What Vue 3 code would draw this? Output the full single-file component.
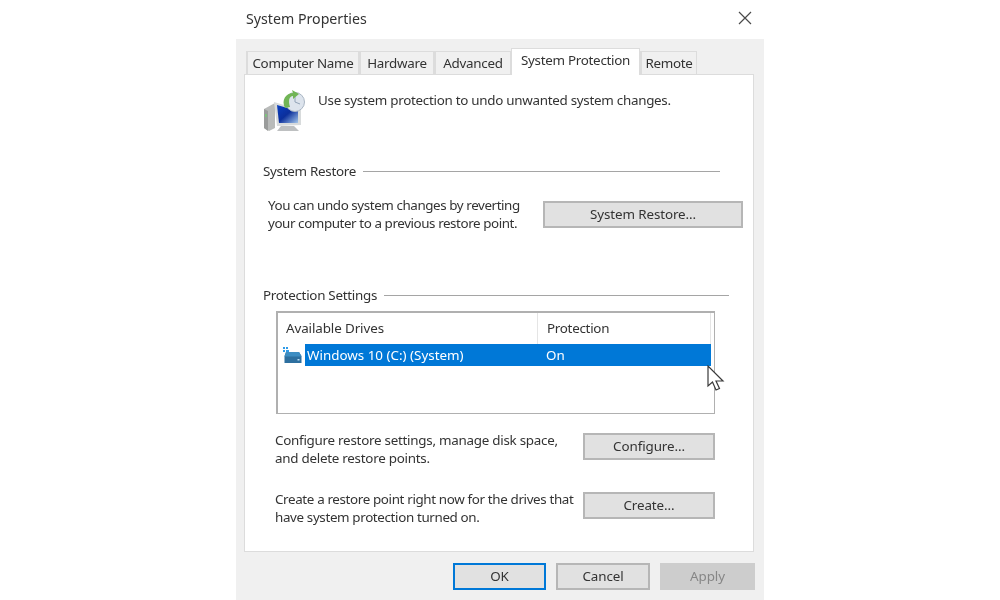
<script setup>
const tabs = [
  { name: 'Computer Name', width: 113 },
  { name: 'Hardware', width: 75 },
  { name: 'Advanced', width: 77 },
  { name: 'System Protection', width: 129, active: true },
  { name: 'Remote', width: 57 }
]
</script>

<template>
  <div class="page">
    <div class="dialog">
      <header class="titlebar">
        <span class="title">System Properties</span>
        <svg class="close" width="14" height="14" viewBox="0 0 14 14" aria-hidden="true">
          <path d="M1 1 13 13M13 1 1 13" stroke="#4a4a4a" stroke-width="1.2" fill="none" />
        </svg>
      </header>

      <div class="body">
        <div class="tabs">
          <div
            v-for="t in tabs"
            :key="t.name"
            class="tab"
            :class="{ active: t.active }"
            :style="{ width: t.width + 'px' }"
          >{{ t.name }}</div>
        </div>

        <section class="panel">
          <div class="intro">
            <svg class="shield" width="42" height="42" viewBox="0 0 42 42" aria-hidden="true">
              <defs>
                <linearGradient id="scr" x1="0" y1="0" x2="1" y2="1">
                  <stop offset="0" stop-color="#0a3fc0" />
                  <stop offset="0.5" stop-color="#0b2f9c" />
                  <stop offset="1" stop-color="#a4c6ea" />
                </linearGradient>
              </defs>
              <path d="M0 19 11 13V38L5 41 0 38Z" fill="#b9bbba" />
              <path d="M0 19 4 21V41L0 38Z" fill="#9a9c9b" />
              <rect x="1" y="24" width="1.800" height="3" fill="#7cc47c" />
              <path d="M10 12 37 20V35L13 36Z" fill="#d8dbdc" />
              <path d="M13 15 34 21 34 33 15 33Z" fill="url(#scr)" />
              <path d="M17 36H30L35 41H13Z" fill="#bec0c1" />
              <circle cx="31" cy="12" r="9.500" fill="#dde4ed" stroke="#aab6c4" stroke-width="1" />
              <path d="M31 6V12L36 14" stroke="#93a4b8" stroke-width="1" fill="none" />
              <path d="M21 18C17 10 22 3 29 3L28 0 35 4 29 9 29 6C25 6 24 11 26 17Z" fill="#71b556" />
            </svg>
            <p class="intro-text">Use system protection to undo unwanted system changes.</p>
          </div>

          <div class="group-head restore-head">
            <span>System Restore</span>
            <i class="rule"></i>
          </div>
          <div class="action restore-row">
            <p class="copy">You can undo system changes by reverting<br />your computer to a previous restore point.</p>
            <button class="btn wide">System Restore...</button>
          </div>

          <div class="group-head settings-head">
            <span>Protection Settings</span>
            <i class="rule"></i>
          </div>

          <div class="list">
            <div class="list-head">
              <div class="col-drives">Available Drives</div>
              <div class="col-prot">Protection</div>
            </div>
            <div class="list-row">
              <svg class="drive" width="19" height="16" viewBox="0 0 19 16" aria-hidden="true">
                <rect x="0" y="0" width="2" height="2" fill="#2f9be8" />
                <rect x="3" y="0" width="2" height="2" fill="#2f9be8" />
                <rect x="0" y="3" width="2" height="2" fill="#2f9be8" />
                <rect x="3" y="3" width="3" height="2" fill="#2f9be8" />
                <path d="M3 5H16L18.500 9V16H1.500V9Z" fill="#2d6f9f" />
                <path d="M3 5H16L18.500 9.500H1.500Z" fill="#3d8dc2" />
                <rect x="14.500" y="12" width="2" height="1.500" fill="#bfe0f5" />
              </svg>
              <div class="sel">
                <span class="sel-name">Windows 10 (C:) (System)</span>
                <span class="sel-state">On</span>
              </div>
            </div>
            <svg class="cursor" width="18" height="26" viewBox="0 0 18 26" aria-hidden="true">
              <path d="M1 1V21L5.500 17 9 25 12.500 23.500 9 16H16Z" fill="#fff" stroke="#3a3a3a" stroke-width="1.200" stroke-linejoin="miter" />
            </svg>
          </div>

          <div class="action configure-row">
            <p class="copy">Configure restore settings, manage disk space,<br />and delete restore points.</p>
            <button class="btn">Configure...</button>
          </div>
          <div class="action create-row">
            <p class="copy">Create a restore point right now for the drives that<br />have system protection turned on.</p>
            <button class="btn">Create...</button>
          </div>
        </section>

        <footer class="footer">
          <button class="btn foot primary">OK</button>
          <button class="btn foot">Cancel</button>
          <button class="btn foot disabled">Apply</button>
        </footer>
      </div>
    </div>
  </div>
</template>

<style>
html, body { margin: 0; background: #fff; }
</style>

<style scoped>
.page {
  width: 1000px;
  height: 600px;
  display: flex;
  justify-content: center;
  overflow: hidden;
  font-family: "Noto Sans", "Open Sans", sans-serif;
  font-size: 13.4px;
  letter-spacing: -0.28px;
  color: #333;
}
.dialog { width: 528px; display: flex; flex-direction: column; filter: blur(0.35px); }
.titlebar {
  height: 39px;
  padding: 0 12px 3px 10px;
  box-sizing: border-box;
  display: flex;
  align-items: center;
  justify-content: space-between;
  background: #fff;
}
.title { font-size: 14.2px; letter-spacing: 0; }
.body { flex: 1; background: #f0f0f0; padding-top: 9px; }
.tabs {
  height: 26px;
  padding-left: 10px;
  display: flex;
  align-items: flex-end;
}
.tab {
  height: 23px;
  box-sizing: border-box;
  border: 1px solid #dcdcdc;
  border-bottom: 0;
  border-left-width: 2px;
  text-align: center;
  line-height: 23px;
  white-space: nowrap;
}
.tab.active {
  position: relative;
  height: 27px;
  margin-bottom: -1px;
  line-height: 23px;
  background: #fff;
  border-width: 1px 1px 0;
  z-index: 1;
}
.panel {
  width: 510px;
  height: 478px;
  margin-left: 8px;
  box-sizing: border-box;
  background: #fff;
  border: 1px solid #dcdcdc;
  padding: 15px 0 0;
}
.intro { display: flex; margin-left: 19px; height: 42px; }
.shield { flex: none; }
.intro-text { margin: 0 0 0 12px; line-height: 20px; }
.group-head {
  height: 20px;
  margin-left: 18px;
  display: flex;
  align-items: center;
  gap: 7px;
  line-height: 20px;
}
.rule { flex: 1; height: 1px; background: #a5a5a5; }
.restore-head { margin-top: 29px; width: 457px; }
.settings-head { margin-top: 57px; width: 466px; }
.action { display: flex; justify-content: space-between; align-items: flex-start; height: 27px; }
.copy { margin: 0; line-height: 18px; white-space: nowrap; }
.restore-row { margin: 20px 10px 0 23px; }
.restore-row .copy { margin-top: -5px; letter-spacing: -0.42px; }
.configure-row { margin: 19px 38px 0 30px; }
.create-row { margin: 32px 38px 0 30px; }
.configure-row .copy, .create-row .copy { margin-top: -2px; }
.configure-row .copy { letter-spacing: -0.26px; }
.create-row .copy { letter-spacing: -0.36px; }
.btn {
  width: 132px;
  height: 27px;
  padding: 0;
  box-sizing: border-box;
  background: #e1e1e1;
  border: 2px solid #b6b6b6;
  font: inherit;
  letter-spacing: -0.1px;
  color: inherit;
  line-height: 21px;
}
.btn.wide { width: 200px; }
.list {
  position: relative;
  width: 439px;
  height: 103px;
  margin: 6px 0 0 31px;
  box-sizing: border-box;
  border: 2px solid #b0b0b0;
  border-right-width: 1px;
  border-bottom-width: 1px;
}
.list-head { display: flex; height: 31px; line-height: 30px; }
.col-drives { width: 260px; padding-left: 8px; box-sizing: border-box; border-right: 1px solid #e5e5e5; letter-spacing: -0.1px; }
.col-prot { width: 173px; padding-left: 9px; box-sizing: border-box; border-right: 1px solid #e5e5e5; }
.list-row { display: flex; align-items: center; height: 22px; margin-right: 3px; }
.drive { flex: none; margin: 0 3px 0 5px; }
.sel {
  flex: 1;
  height: 22px;
  display: flex;
  background: #0078d7;
  color: #fff;
  letter-spacing: 0;
  line-height: 22px;
}
.sel-name { width: 241px; padding-left: 2px; box-sizing: border-box; white-space: nowrap; }
.cursor { position: absolute; left: 429px; top: 52px; }
.footer {
  display: flex;
  margin: 11px 9px 0 217px;
  justify-content: space-between;
}
.btn.foot { width: 94px; }
.btn.primary { border-color: #0078d7; width: 93px; color: #333; }
.btn.disabled { width: 95px; background: #cdcdcd; border-color: #cdcdcd; color: #868686; }
</style>
